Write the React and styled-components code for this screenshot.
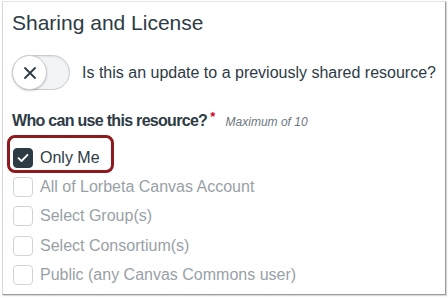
import React from 'react';
import styled, { createGlobalStyle } from 'styled-components';

const GlobalStyle = createGlobalStyle`
  body {
    margin: 0;
    background: #ffffff;
    font-family: "Liberation Sans", Arial, sans-serif;
  }
`;

const Page = styled.div`
  width: 448px;
  height: 298px;
  box-sizing: border-box;
  padding: 1px 2px 3px 2px;
  background: #ffffff;
`;

const Card = styled.div`
  height: 100%;
  box-sizing: border-box;
  border-left: 1px solid #d6d6d6;
  border-top: 1px solid #e4e4e4;
  border-right: 1px solid #9c9c9c;
  border-bottom: 1px solid #9c9c9c;
  box-shadow: 1px 1px 1px rgba(0, 0, 0, 0.15);
  padding: 8px 0 0 9px;
  color: #2d3b45;
  display: flex;
  flex-direction: column;
`;

const Title = styled.h2`
  margin: 0;
  font-size: 21px;
  line-height: 26px;
  font-weight: 400;
  color: #2d3b45;
`;

const ToggleRow = styled.div`
  margin-top: 19px;
  display: flex;
  align-items: center;
  gap: 12px;
`;

const Track = styled.div`
  width: 58px;
  height: 35px;
  box-sizing: border-box;
  border-radius: 18px;
  background: #f3f4f5;
  border: 1px solid #c7cdd1;
  box-shadow: inset 0 1px 2px rgba(0, 0, 0, 0.08);
  display: flex;
  align-items: center;
`;

const Knob = styled.div`
  width: 35px;
  height: 35px;
  margin-left: -1px;
  box-sizing: border-box;
  border-radius: 50%;
  background: #ffffff;
  border: 1px solid #c7cdd1;
  box-shadow: 0 1px 2px rgba(0, 0, 0, 0.2);
  display: flex;
  align-items: center;
  justify-content: center;
`;

const ToggleLabel = styled.span`
  font-size: 16px;
  line-height: 20px;
  color: #2d3b45;
`;

const Legend = styled.div`
  margin-top: 21px;
  display: flex;
  align-items: baseline;
  font-size: 16px;
  letter-spacing: -0.7px;
  line-height: 20px;
  font-weight: 700;
  color: #2d3b45;
`;

const Required = styled.span`
  color: #d0021b;
  font-size: 13px;
  position: relative;
  top: -5px;
  margin-left: 3px;
`;

const Hint = styled.span`
  margin-left: 11px;
  font-size: 12px;
  letter-spacing: 0;
  font-style: italic;
  font-weight: 400;
  color: #6b7780;
`;

const List = styled.div`
  margin-top: 11px;
  display: flex;
  flex-direction: column;
`;

const Row = styled.label`
  position: relative;
  height: 29.3px;
  display: flex;
  align-items: center;
  gap: 7px;
  padding-left: 1px;
  font-size: 16px;
  color: ${p => (p.$active ? '#2d3b45' : '#98a1a7')};

  ${p =>
    p.$highlight &&
    `
    &::after {
      content: '';
      position: absolute;
      left: -5px;
      top: -8px;
      width: 107px;
      height: 38px;
      box-sizing: border-box;
      border: 3px solid #8e1a1f;
      border-radius: 8px;
    }
  `}
`;

const Box = styled.span`
  width: 20px;
  height: 20px;
  box-sizing: border-box;
  border-radius: 4px;
  border: 1px solid ${p => (p.$checked ? '#2d3b45' : '#cfd4d8')};
  background: ${p => (p.$checked ? '#2d3b45' : '#ffffff')};
  display: flex;
  align-items: center;
  justify-content: center;
  flex-shrink: 0;
`;

const options = [
  { label: 'Only Me', checked: true },
  { label: 'All of Lorbeta Canvas Account' },
  { label: 'Select Group(s)' },
  { label: 'Select Consortium(s)' },
  { label: 'Public (any Canvas Commons user)' },
];

export default function App() {
  return (
    <>
      <GlobalStyle />
      <Page>
        <Card>
          <Title>Sharing and License</Title>
          <ToggleRow>
            <Track>
              <Knob>
                <svg width="14" height="14" viewBox="0 0 14 14">
                  <path d="M2 2 L12 12 M12 2 L2 12" stroke="#2d3b45" strokeWidth="1.8" strokeLinecap="round" />
                </svg>
              </Knob>
            </Track>
            <ToggleLabel>Is this an update to a previously shared resource?</ToggleLabel>
          </ToggleRow>
          <Legend>
            Who can use this resource?<Required>*</Required>
            <Hint>Maximum of 10</Hint>
          </Legend>
          <List>
            {options.map(o => (
              <Row key={o.label} $active={o.checked} $highlight={o.checked}>
                <Box $checked={o.checked}>
                  {o.checked && (
                    <svg width="12" height="10" viewBox="0 0 12 10">
                      <path d="M1.5 5.2 L4.5 8 L10.5 1.8" fill="none" stroke="#ffffff" strokeWidth="1.8" strokeLinecap="round" strokeLinejoin="round" />
                    </svg>
                  )}
                </Box>
                {o.label}
              </Row>
            ))}
          </List>
        </Card>
      </Page>
    </>
  );
}
